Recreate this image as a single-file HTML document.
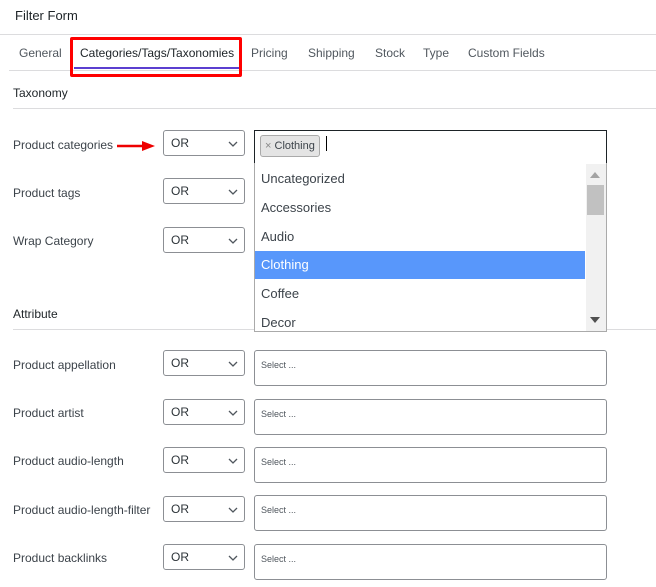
<!DOCTYPE html><html><head><style>
body{margin:0;width:656px;height:587px;background:#fff;font-family:"Liberation Sans",sans-serif;color:#2c3338;position:relative;overflow:hidden}
.a{position:absolute;white-space:nowrap}
.lbl{font-size:12px;left:13px;color:#3c434a}
.sel{position:absolute;left:163px;width:80px;height:26px;border:1px solid #8c8f94;border-radius:3px;box-sizing:border-box;width:82px}
.sel span{position:absolute;left:7px;top:5px;font-size:12px;color:#2c3338}
.sel svg{position:absolute;right:6px;top:10px}
.inp{position:absolute;left:254px;width:353px;height:36px;border:1px solid #8c8f94;border-radius:3px;box-sizing:border-box}
.inp span{position:absolute;left:6px;top:9px;font-size:9px;color:#50575e}
.hr{position:absolute;height:1px;background:#dcdcde}
.it{position:absolute;left:255px;width:330px;height:28px;font-size:13px;color:#3c434a;line-height:28px;padding-left:6px;box-sizing:border-box}
</style></head><body>
<div class="a" style="left:15px;top:8px;font-size:13px;color:#1d2327">Filter Form</div>
<div class="hr" style="left:0;top:34px;width:656px"></div>
<div class="a" style="left:19px;top:46px;font-size:12px;color:#50575e">General</div>
<div class="a" style="left:80px;top:46px;font-size:12px;color:#1d2327">Categories/Tags/Taxonomies</div>
<div class="a" style="left:251px;top:46px;font-size:12px;color:#50575e">Pricing</div>
<div class="a" style="left:308px;top:46px;font-size:12px;color:#50575e">Shipping</div>
<div class="a" style="left:375px;top:46px;font-size:12px;color:#50575e">Stock</div>
<div class="a" style="left:423px;top:46px;font-size:12px;color:#50575e">Type</div>
<div class="a" style="left:468px;top:46px;font-size:12px;color:#50575e">Custom Fields</div>
<div class="hr" style="left:9px;top:70px;width:647px"></div>
<div class="a" style="left:74px;top:67px;width:165px;height:2px;background:#5b3fd0"></div>
<div class="a" style="left:70px;top:37px;width:166px;height:34px;border:3px solid #f00;border-radius:2px"></div>
<div class="a" style="left:13px;top:86px;font-size:12px;color:#1d2327">Taxonomy</div>
<div class="hr" style="left:13px;top:108px;width:643px"></div>

<div class="a lbl" style="top:138px">Product categories</div>
<svg class="a" style="left:116px;top:140px" width="40" height="12"><path d="M1 6H28" stroke="#e00" stroke-width="2.5"/><path d="M26 1L39 6L26 11Z" fill="#e00"/></svg>
<div class="a lbl" style="top:186px">Product tags</div>
<div class="a lbl" style="top:234px">Wrap Category</div>
<div class="sel" style="top:130px"><span>OR</span><svg width="10" height="6"><path d="M1 1L5 5L9 1" stroke="#50575e" stroke-width="1.3" fill="none"/></svg></div>
<div class="sel" style="top:178px"><span>OR</span><svg width="10" height="6"><path d="M1 1L5 5L9 1" stroke="#50575e" stroke-width="1.3" fill="none"/></svg></div>
<div class="sel" style="top:227px"><span>OR</span><svg width="10" height="6"><path d="M1 1L5 5L9 1" stroke="#50575e" stroke-width="1.3" fill="none"/></svg></div>

<div class="a lbl" style="top:307px;color:#1d2327">Attribute</div>
<div class="hr" style="left:13px;top:329px;width:643px"></div>

<div class="a" style="left:254px;top:130px;width:353px;height:34px;border:1px solid #1d2327;box-sizing:border-box;border-bottom:1px solid #1d2327"></div>
<div class="a" style="left:260px;top:135px;width:60px;height:22px;background:#e4e4e4;border:1px solid #aaa;border-radius:3px;box-sizing:border-box;font-size:11px;line-height:20px;padding-left:4px;color:#3c434a"><span style="color:#888">×</span> Clothing</div>
<div class="a" style="left:326px;top:136px;width:1px;height:15px;background:#000"></div>
<div class="a" style="left:254px;top:163px;width:353px;height:169px;border:1px solid #aaa;border-top:none;box-sizing:border-box;background:#fff"></div>
<div class="it" style="top:165px">Uncategorized</div>
<div class="it" style="top:194px">Accessories</div>
<div class="it" style="top:223px">Audio</div>
<div class="it" style="top:251px;background:#5897fb;color:#fff">Clothing</div>
<div class="it" style="top:280px">Coffee</div>
<div class="it" style="top:309px;height:22px;overflow:hidden">Decor</div>
<div class="a" style="left:586px;top:164px;width:20px;height:167px;background:#f1f1f1"></div>
<div class="a" style="left:587px;top:185px;width:17px;height:30px;background:#c1c1c1"></div>
<svg class="a" style="left:590px;top:172px" width="10" height="6"><path d="M0 6L5 0L10 6Z" fill="#a3a3a3"/></svg>
<svg class="a" style="left:590px;top:317px" width="10" height="6"><path d="M0 0L5 6L10 0Z" fill="#505050"/></svg>

<div class="a lbl" style="top:358px">Product appellation</div>
<div class="a lbl" style="top:406px">Product artist</div>
<div class="a lbl" style="top:454px">Product audio-length</div>
<div class="a lbl" style="top:503px">Product audio-length-filter</div>
<div class="a lbl" style="top:551px">Product backlinks</div>
<div class="sel" style="top:350px"><span>OR</span><svg width="10" height="6"><path d="M1 1L5 5L9 1" stroke="#50575e" stroke-width="1.3" fill="none"/></svg></div>
<div class="sel" style="top:399px"><span>OR</span><svg width="10" height="6"><path d="M1 1L5 5L9 1" stroke="#50575e" stroke-width="1.3" fill="none"/></svg></div>
<div class="sel" style="top:447px"><span>OR</span><svg width="10" height="6"><path d="M1 1L5 5L9 1" stroke="#50575e" stroke-width="1.3" fill="none"/></svg></div>
<div class="sel" style="top:496px"><span>OR</span><svg width="10" height="6"><path d="M1 1L5 5L9 1" stroke="#50575e" stroke-width="1.3" fill="none"/></svg></div>
<div class="sel" style="top:544px"><span>OR</span><svg width="10" height="6"><path d="M1 1L5 5L9 1" stroke="#50575e" stroke-width="1.3" fill="none"/></svg></div>
<div class="inp" style="top:350px"><span>Select ...</span></div>
<div class="inp" style="top:399px"><span>Select ...</span></div>
<div class="inp" style="top:447px"><span>Select ...</span></div>
<div class="inp" style="top:495px"><span>Select ...</span></div>
<div class="inp" style="top:544px"><span>Select ...</span></div>
</body></html>
